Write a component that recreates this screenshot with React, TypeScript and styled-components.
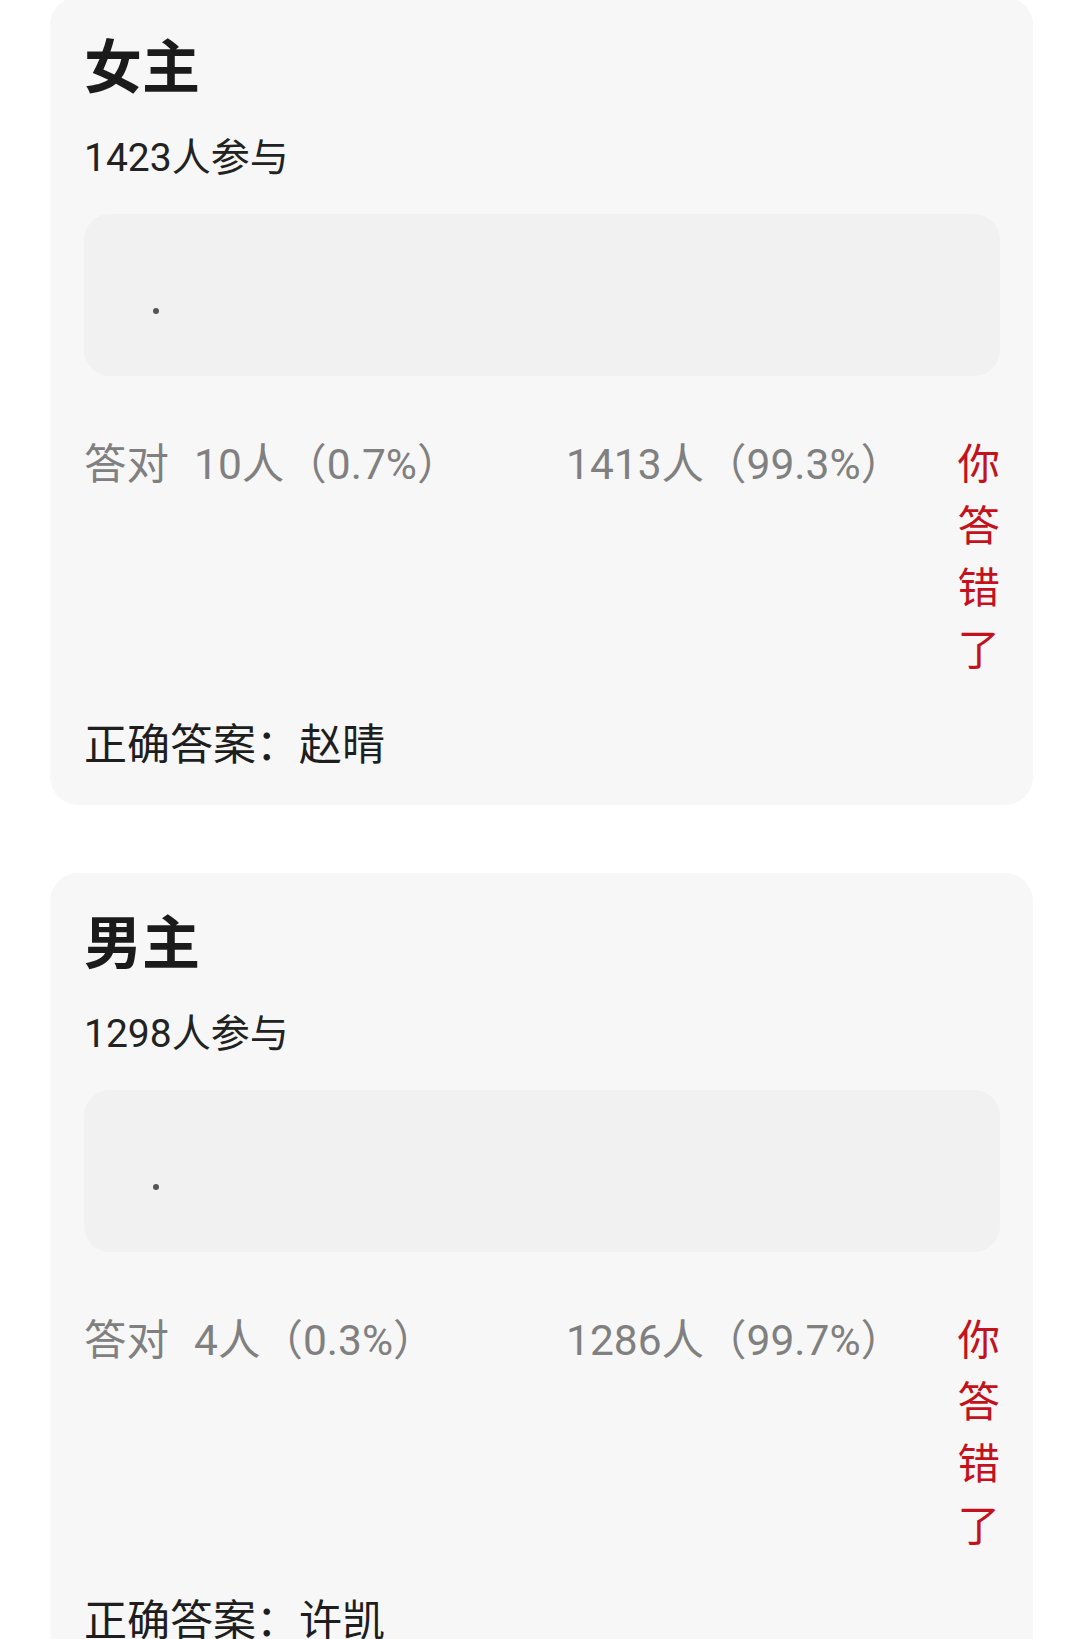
import React from 'react';
import styled, { createGlobalStyle } from 'styled-components';

const GlobalStyle = createGlobalStyle`
  html, body {
    margin: 0;
    padding: 0;
    background: #ffffff;
  }
  body {
    font-family: Roboto, "Noto Sans CJK SC", sans-serif;
    overflow: hidden;
  }
`;

const StyledPage = styled.div`
  display: flex;
  flex-direction: column;
  gap: 68px;
  padding: 0 47px 0 50px;
  margin-top: -3px;
`;

const StyledCard = styled.section`
  background-color: #f7f7f7;
  border-radius: 28px;
  padding: 36px 33px 32px 34px;
  display: flex;
  flex-direction: column;
`;

const StyledTitle = styled.h2`
  margin: 0;
  font-size: 58px;
  line-height: 70px;
  font-weight: 700;
  color: #1b1b1b;
`;

const StyledJoined = styled.div`
  margin-top: 30px;
  font-size: 39px;
  line-height: 50px;
  color: #222222;
`;

const StyledOptionBox = styled.div`
  margin-top: 31px;
  height: 162px;
  border-radius: 26px;
  background-color: #f1f1f1;
  display: flex;
  align-items: center;
  padding-left: 69px;
`;

const StyledDot = styled.span`
  width: 6px;
  height: 6px;
  border-radius: 50%;
  background-color: #555555;
  margin-top: 32px;
`;

const StyledStatsRow = styled.div`
  margin-top: 58px;
  display: grid;
  grid-template-columns: 482px 1fr 42px;
  font-size: 42.5px;
  line-height: 62px;
`;

const StyledStat = styled.div`
  color: #808080;
  white-space: nowrap;
`;

const StyledLabel = styled.span`
  margin-right: 25px;
`;

const StyledVerdict = styled.div`
  color: #c3121c;
  display: flex;
  flex-direction: column;
  align-items: flex-end;
`;

const StyledAnswer = styled.div`
  margin-top: 35px;
  font-size: 43px;
  line-height: 56px;
  color: #1e1e1e;
`;

type Question = {
  title: string;
  joined: number;
  right: number;
  rightPct: string;
  wrong: number;
  wrongPct: string;
  answer: string;
};

const questions: Question[] = [
  { title: '女主', joined: 1423, right: 10, rightPct: '0.7%', wrong: 1413, wrongPct: '99.3%', answer: '赵晴' },
  { title: '男主', joined: 1298, right: 4, rightPct: '0.3%', wrong: 1286, wrongPct: '99.7%', answer: '许凯' },
];

const QuestionCard = ({ q }: { q: Question }) => (
  <StyledCard>
    <StyledTitle>{q.title}</StyledTitle>
    <StyledJoined>{q.joined}人参与</StyledJoined>
    <StyledOptionBox>
      <StyledDot />
    </StyledOptionBox>
    <StyledStatsRow>
      <StyledStat>
        <StyledLabel>答对</StyledLabel>
        {q.right}人（{q.rightPct}）
      </StyledStat>
      <StyledStat>
        {q.wrong}人（{q.wrongPct}）
      </StyledStat>
      <StyledVerdict>
        {'你答错了'.split('').map((c, i) => (
          <span key={i}>{c}</span>
        ))}
      </StyledVerdict>
    </StyledStatsRow>
    <StyledAnswer>正确答案：{q.answer}</StyledAnswer>
  </StyledCard>
);

export default function App() {
  return (
    <>
      <GlobalStyle />
      <StyledPage>
        {questions.map((q) => (
          <QuestionCard key={q.title} q={q} />
        ))}
      </StyledPage>
    </>
  );
}
